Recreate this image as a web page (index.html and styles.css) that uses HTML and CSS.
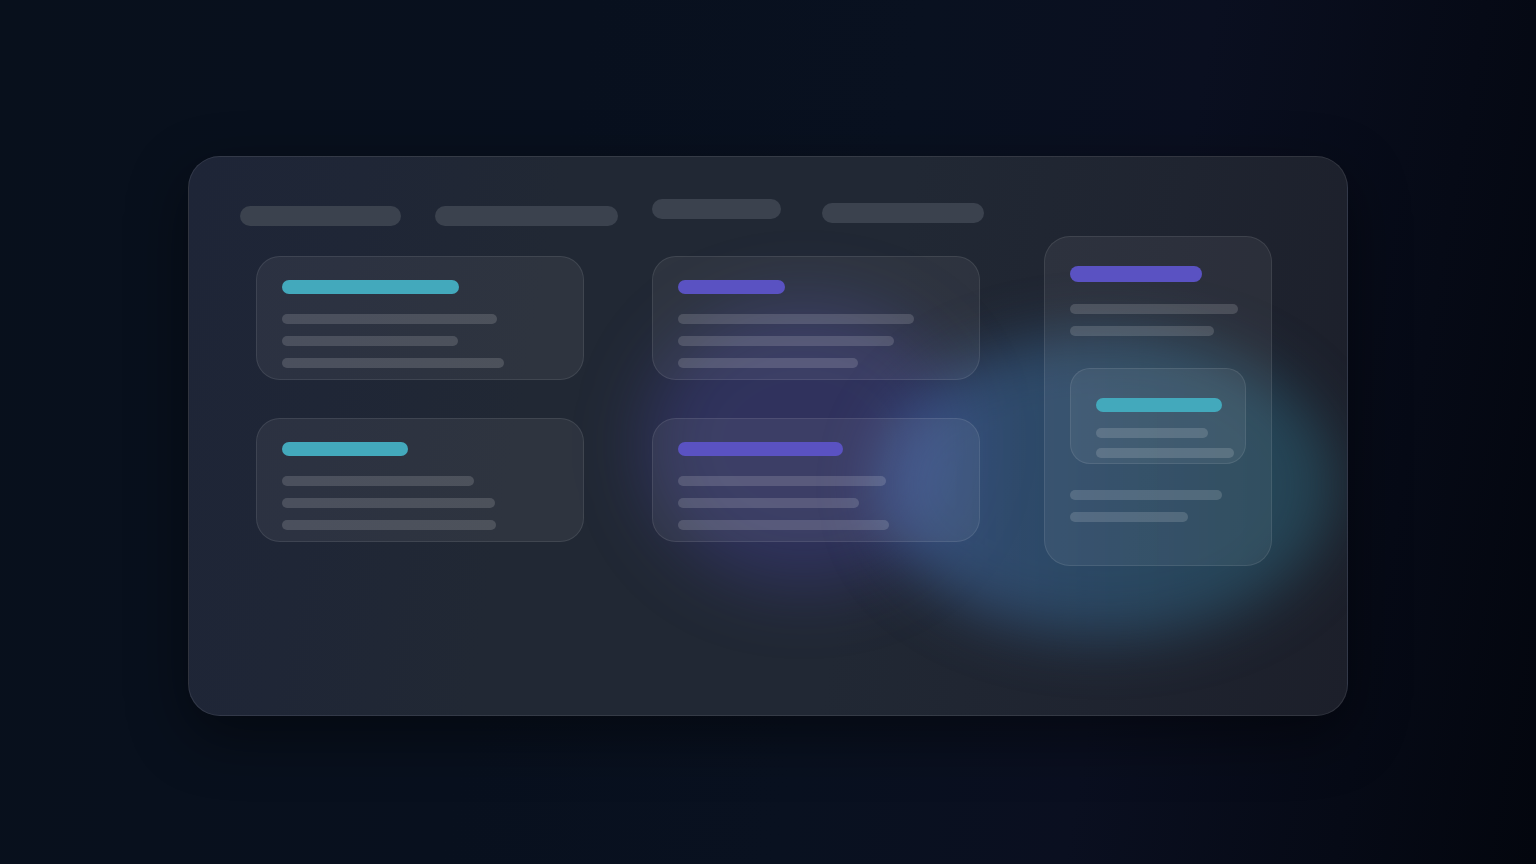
FILE: index.html
```html
<!DOCTYPE html>
<html lang="en">
<head>
<meta charset="utf-8">
<title>Board skeleton</title>
<link rel="stylesheet" href="styles.css">
</head>
<body>
<main class="stage">
  <section class="panel">
    <div class="glow glow-purple"></div>
    <div class="glow glow-teal"></div>
    <header class="tabs">
      <span class="pill pill-1"></span>
      <span class="pill pill-2"></span>
      <span class="pill pill-3"></span>
      <span class="pill pill-4"></span>
    </header>
    <div class="board">
      <div class="col">
        <article class="card">
          <span class="title cyan w177"></span>
          <span class="line w215"></span>
          <span class="line w176"></span>
          <span class="line w222"></span>
        </article>
        <article class="card">
          <span class="title cyan w126"></span>
          <span class="line w192"></span>
          <span class="line w213"></span>
          <span class="line w214"></span>
        </article>
      </div>
      <div class="col col-mid">
        <article class="card">
          <span class="title purple w107"></span>
          <span class="line w236"></span>
          <span class="line w216"></span>
          <span class="line w180"></span>
        </article>
        <article class="card">
          <span class="title purple w165"></span>
          <span class="line w208"></span>
          <span class="line w181"></span>
          <span class="line w211"></span>
        </article>
      </div>
      <div class="col col-right">
        <article class="card card-tall">
          <span class="title title-lg purple w132"></span>
          <span class="line w168"></span>
          <span class="line w144"></span>
          <div class="card-inner">
            <span class="title cyan w126"></span>
            <span class="line w112"></span>
            <span class="line w138"></span>
          </div>
          <span class="line w152"></span>
          <span class="line w118"></span>
        </article>
      </div>
    </div>
  </section>
</main>
</body>
</html>
```
FILE: styles.css
```css
* { box-sizing: border-box; }
html, body { margin: 0; padding: 0; }
body {
  width: 1536px;
  height: 864px;
  overflow: hidden;
  font-family: "Inter", "Liberation Sans", sans-serif;
  background:
    linear-gradient(100deg, #08101c 0%, #08101e 35%, #091120 55%, #0a0f20 72%, #060a16 88%, #03060e 100%);
}
.stage {
  display: flex;
  justify-content: center;
  padding-top: 156px;
}
.panel {
  position: relative;
  width: 1160px;
  height: 560px;
  border-radius: 32px;
  border: 1px solid rgba(255,255,255,0.09);
  background: linear-gradient(100deg, #1e2537 0%, #1f2636 14%, #212834 30%, #212834 58%, #1f2430 80%, #1c1f2a 100%);
  box-shadow: 0 20px 60px rgba(0,0,0,0.45);
  overflow: hidden;
  padding: 42px 0 0 51px;
}
.glow {
  position: absolute;
  border-radius: 50%;
  pointer-events: none;
}
.glow-purple {
  left: 455px;
  top: 145px;
  width: 320px;
  height: 285px;
  background: rgba(84, 76, 190, 0.30);
  filter: blur(34px);
}
.glow-teal {
  left: 690px;
  top: 176px;
  width: 456px;
  height: 304px;
  background: linear-gradient(90deg, rgba(72,110,180,0.55) 0%, rgba(58,112,160,0.48) 40%, rgba(44,112,130,0.45) 100%);
  filter: blur(28px);
}
.tabs {
  position: relative;
  display: flex;
  align-items: flex-start;
  height: 27px;
}
.pill {
  display: block;
  height: 20px;
  border-radius: 10px;
  background: #3b424e;
}
.pill-1 { width: 161px; margin-top: 7px; }
.pill-2 { width: 183px; margin-top: 7px; margin-left: 34px; }
.pill-3 { width: 129px; margin-top: 0; margin-left: 34px; }
.pill-4 { width: 162px; margin-top: 4px; margin-left: 41px; }
.board {
  position: relative;
  display: flex;
  align-items: flex-start;
  margin-top: 10px;
  padding-left: 16px;
}
.col {
  display: flex;
  flex-direction: column;
  gap: 38px;
  margin-top: 20px;
}
.col-mid { margin-left: 68px; }
.col-right { margin-left: 64px; margin-top: 0; }
.card {
  display: flex;
  flex-direction: column;
  align-items: flex-start;
  width: 328px;
  height: 124px;
  padding: 23px 25px 0;
  border-radius: 24px;
  border: 1px solid rgba(255,255,255,0.09);
  background: rgba(255,255,255,0.06);
}
.card-tall {
  width: 228px;
  height: 330px;
  padding-top: 29px;
  border-radius: 26px;
}
.card-inner {
  display: flex;
  flex-direction: column;
  align-items: flex-start;
  width: 176px;
  height: 96px;
  margin-top: 32px;
  margin-bottom: 26px;
  padding: 29px 25px 0;
  border-radius: 20px;
  border: 1px solid rgba(255,255,255,0.09);
  background: rgba(255,255,255,0.06);
}
.title {
  display: block;
  height: 14px;
  border-radius: 7px;
  flex-shrink: 0;
}
.title-lg { height: 16px; border-radius: 8px; }
.cyan { background: #43a9bc; }
.purple { background: #5a52c2; }
.line {
  display: block;
  height: 10px;
  border-radius: 5px;
  background: rgba(255,255,255,0.15);
  flex-shrink: 0;
}
.card > .title + .line { margin-top: 20px; }
.card > .line + .line { margin-top: 12px; }
.card-tall > .title + .line { margin-top: 22px; }
.card-inner > .title + .line { margin-top: 16px; }
.card-inner > .line + .line { margin-top: 10px; }
.w107 { width: 107px; } .w112 { width: 112px; } .w118 { width: 118px; }
.w126 { width: 126px; } .w132 { width: 132px; } .w138 { width: 138px; }
.w144 { width: 144px; } .w152 { width: 152px; } .w165 { width: 165px; }
.w168 { width: 168px; } .w176 { width: 176px; } .w177 { width: 177px; }
.w180 { width: 180px; } .w181 { width: 181px; } .w192 { width: 192px; }
.w208 { width: 208px; } .w211 { width: 211px; } .w213 { width: 213px; }
.w214 { width: 214px; } .w215 { width: 215px; } .w216 { width: 216px; }
.w222 { width: 222px; } .w236 { width: 236px; }
```
